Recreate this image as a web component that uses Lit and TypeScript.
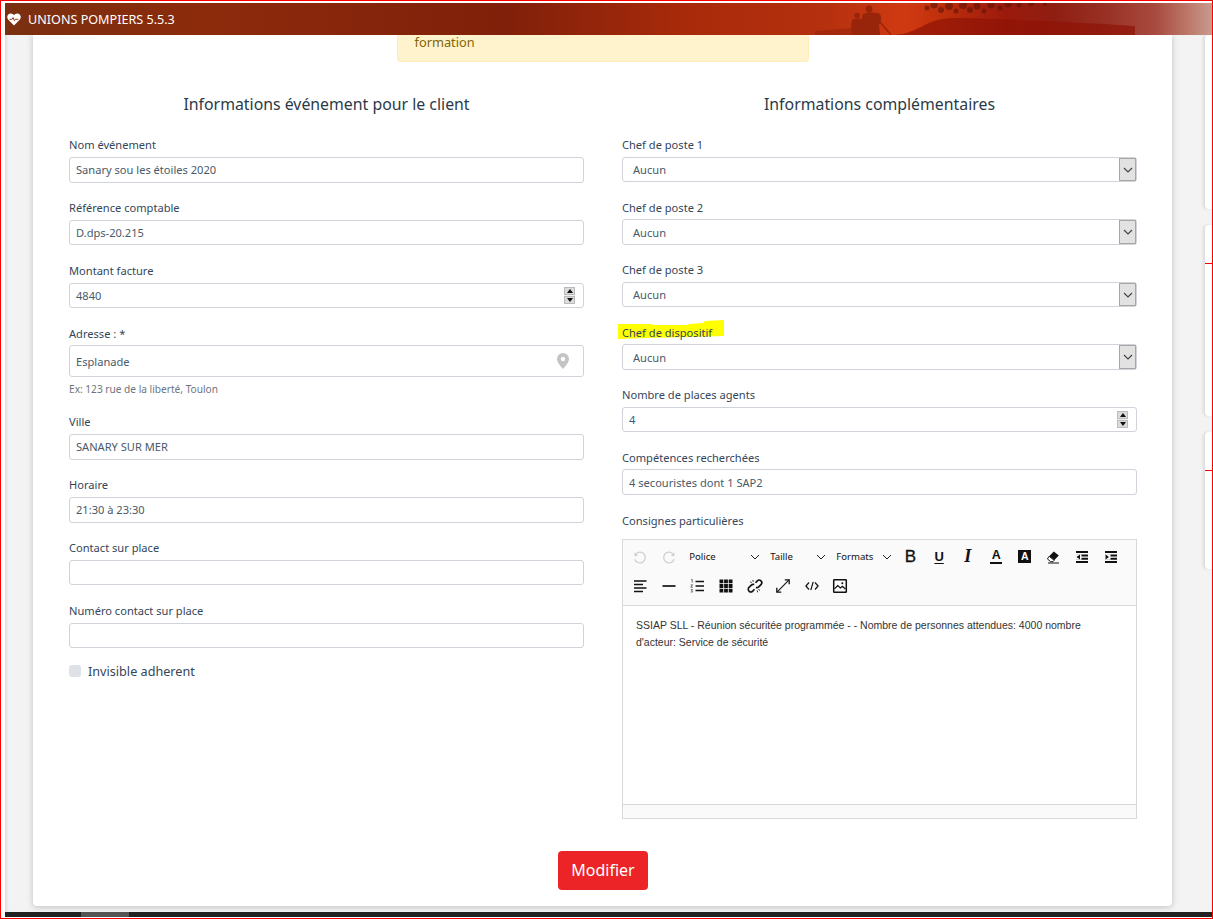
import { LitElement, html, css, svg } from "lit";
import { customElement } from "lit/decorators.js";

const ic = (body: unknown) => html`<svg class="ic" viewBox="0 0 24 24" width="24" height="24">${body}</svg>`;

const undo = svg`<path d="M8.200 8.600a5.400 5.400 0 1 1-1.400 5.600" fill="none" stroke="#cfcfcf" stroke-width="1.300"/><path d="M6.400 7.600l.3 4 3.700-1.300z" fill="#cfcfcf"/>`;
const redo = svg`<path d="M15.800 8.600a5.400 5.400 0 1 0 1.400 5.600" fill="none" stroke="#cfcfcf" stroke-width="1.300"/><path d="M17.600 7.600l-.3 4-3.700-1.300z" fill="#cfcfcf"/>`;
const eraser = svg`<path d="M12.800 6.500l5 4-4.600 4.800-5-4z" fill="#111"/><path d="M8.200 11.300l5 4-1.300 1.400H9.600l-3.200-2.800z" fill="#fff" stroke="#111" stroke-width="1"/><path d="M7 18h11" stroke="#111" stroke-width="1"/>`;
const bars = svg`<path d="M6 7h12M6 17h12" stroke="#111" stroke-width="2"/><path d="M6 10.400h12M6 13.700h12" stroke="#111" stroke-width="2"/>`;
const notch = svg`<rect x="5.500" y="9.200" width="6" height="5.600" fill="#fafafa"/>`;
const outdent = svg`${bars}${notch}<path d="M6.500 12l3.500-2.600v5.200z" fill="#111"/>`;
const indent = svg`${bars}${notch}<path d="M10 12L6.500 9.400v5.200z" fill="#111"/>`;
const alignLeft = svg`<path d="M6 7h12.500M6 10.500h9M6 14h12.500M6 17.500h9" stroke="#111" stroke-width="1.600"/>`;
const hr = svg`<path d="M5.500 12h13" stroke="#111" stroke-width="1.700"/>`;
const ol = svg`<path d="M10.500 7.500h8.500M10.500 12h8.500M10.500 16.500h8.500" stroke="#111" stroke-width="1.500"/><path d="M6.200 5.800l1-.5v3.300M5.800 10.800h1.800l-1.800 2.400h2M5.800 15.600h1.800l-.9 1.200.9 1.200H5.800" fill="none" stroke="#333" stroke-width=".7"/>`;
const table = svg`<path d="M5.500 5.500h3.800v3.800H5.500zM10.100 5.500h3.800v3.800h-3.800zM14.700 5.500h3.800v3.800h-3.800zM5.500 10.100h3.800v3.800H5.500zM10.100 10.100h3.800v3.800h-3.800zM14.700 10.100h3.800v3.800h-3.800zM5.500 14.700h3.800v3.800H5.500zM10.100 14.700h3.800v3.800h-3.800zM14.700 14.700h3.800v3.800h-3.800z" fill="#111"/>`;
const unlink = svg`<path d="M12.500 8.800l1.800-1.900a2.600 2.600 0 0 1 3.700 3.700l-2.300 2.300a2.600 2.600 0 0 1-2.900.5M11.500 15.200l-1.800 1.900a2.600 2.600 0 0 1-3.700-3.700l2.300-2.300a2.600 2.600 0 0 1 2.900-.5" fill="none" stroke="#111" stroke-width="1.600"/><path d="M9.800 6l.5 1.800M7.200 7.800l1.500.9M14.200 16.500l.5 1.800M15.500 15.500l1.500.9" stroke="#111" stroke-width=".9"/>`;
const fullscreen = svg`<path d="M6.200 17.800L17.800 6.200" stroke="#111" stroke-width="1.100"/><path d="M13.800 5.800h4.400v4.400M5.800 13.800v4.400h4.400" fill="none" stroke="#111" stroke-width="1.300"/>`;
const code = svg`<path d="M9 8.500L5.900 12 9 15.500M15 8.500l3.100 3.500-3.100 3.500M13.200 7.800l-2.400 8.400" fill="none" stroke="#111" stroke-width="1.200"/>`;
const image = svg`<rect x="5.700" y="5.700" width="12.600" height="12.600" rx=".6" fill="none" stroke="#111" stroke-width="1.500"/><path d="M6.500 14.800l3.200-3.300 2.700 2.500 2-1.800 3 2.800" fill="none" stroke="#111" stroke-width="1.200"/><circle cx="14.300" cy="9.200" r="1" fill="#111"/>`;

const chevron = html`<svg class="chev" viewBox="0 0 10 6" width="10" height="6"><path d="M1 1l4 4 4-4" fill="none" stroke="#222" stroke-width="1"/></svg>`;
const selArrow = html`<span class="arrow"><svg viewBox="0 0 10 6" width="10" height="6"><path d="M1 1l4 4 4-4" fill="none" stroke="#444" stroke-width="1.200"/></svg></span>`;

const leaves: [number, number, number][] = [
  [922, 5, 2.500], [929, 2, 3.500], [936, 7, 3], [944, 3, 4], [951, 8, 2.500], [958, 2, 4], [965, 7, 3], [972, 3, 3.500],
  [979, 8, 2.500], [986, 2, 3.500], [995, 5, 2.500], [1003, 1, 3.500], [1014, 2, 2.500], [1026, 0, 3], [1040, 1, 2],
];

@customElement("app-root")
export class AppRoot extends LitElement {
  static styles = css`
    :host {
      display: grid;
      grid-template-rows: 32px 1fr 5px;
      position: relative;
      box-sizing: border-box;
      width: 1213px;
      height: 919px;
      padding: 2px 0 1px 4px;
      overflow: hidden;
      background: #fff;
      font-family: "Noto Sans", "Open Sans", sans-serif;
      color: #2f4050;
      border: 1px solid #f00;
    }
    .hdr {
      position: relative;
      display: flex;
      align-items: center;
      gap: 7px;
      padding-left: 2px;
      overflow: hidden;
      color: #fff;
      font-size: 12.600px;
      background: linear-gradient(90deg, #7a3010 0, #8c2b0c 200px, #80200a 500px, #a82a0a 680px, #b5300e 820px, #d03a12 900px, #c0300c 935px, #9a1a0c 1000px, #8f1e12 1050px, #983024 1100px, #a84a3e 1150px, #c08274 1190px, #c99a90 1207px);
    }
    .scene { position: absolute; left: 0; top: 0; }
    .soft { filter: blur(0.7px); }
    .hdr > span, .hdr > .heart { position: relative; }
    .heart { flex: none; }
    .main {
      display: flex;
      min-height: 0;
      background: #f3f3f3;
      box-shadow: inset 4px 0 3px -2px #ddd;
      padding-left: 28px;
    }
    .card {
      box-sizing: border-box;
      width: 1139px;
      flex: none;
      padding: 0 35px 0 36px;
      height: 871px;
      background: #fff;
      border-radius: 0 0 4px 4px;
      box-shadow: 0 1px 6px rgba(0, 0, 0, 0.22);
      display: flex;
      flex-direction: column;
    }
    .alert {
      box-sizing: border-box;
      align-self: center;
      width: 412px;
      height: 27px;
      margin-right: 1px;
      padding: 0 17px;
      font-size: 12.800px;
      line-height: 15px;
      color: #856404;
      background: #fff3cd;
      border: 1px solid #ffeeba;
      border-top: 0;
      border-radius: 0 0 4px 4px;
    }
    .cols { display: flex; gap: 38px; margin-top: 30px; }
    .col { width: 515px; flex: none; }
    h2 {
      margin: 0 0 20.300px;
      font-size: 15.850px;
      line-height: 24px;
      font-weight: 400;
      text-align: center;
      color: #2b3a48;
    }
    .f { position: relative; }
    .l .f { margin-bottom: 16.480px; }
    .r .f { margin-bottom: 16.500px; }
    label { display: block; font-size: 11.100px; line-height: 17px; margin-bottom: 3.700px; color: #33465a; }
    label.last { margin-top: 17.500px; }
    .in {
      box-sizing: border-box;
      position: relative;
      display: flex;
      align-items: center;
      width: 100%;
      height: 25.670px;
      padding: 0 6px;
      font-size: 11.100px;
      color: #495a68;
      background: #fff;
      border: 1px solid #ced4da;
      border-radius: 3px;
    }
    .r .in { height: 25.300px; }
    .in.tall { height: 32px; }
    .in.sel { padding-left: 10px; }
    .in.blue { color: #2f5c8c; }
    .help { margin: 5px 0 -0.500px; font-size: 10.150px; line-height: 15px; color: #6c757d; }
    .pin { position: absolute; right: 14px; top: 7px; }
    .spin {
      position: absolute;
      right: 8px;
      top: 3px;
      width: 11px;
      height: 17px;
      display: flex;
      flex-direction: column;
      gap: 1px;
      background: #f0f0f0;
    }
    .spin i { flex: 1; background: #dcdcdc; position: relative; border: 1px solid #bbb; box-sizing: border-box; display: flex; align-items: center; justify-content: center; }
    .spin i::after { content: ""; border: 3px solid transparent; }
    .spin i.up::after { border-top: 0; border-bottom: 4px solid #111; }
    .spin i.dn::after { border-bottom: 0; border-top: 4px solid #111; }
    .arrow {
      position: absolute;
      right: 0;
      top: 0;
      bottom: 0;
      width: 17px;
      box-sizing: border-box;
      display: flex;
      align-items: center;
      justify-content: center;
      background: #e2e2e2;
      border: 1px solid #a6a6a6;
    }
    .arrow svg { width: 10px; height: 6px; }
    .check { display: flex; align-items: center; gap: 7px; font-size: 12.650px; line-height: 18px; margin-top: -2.500px; color: #33465a; }
    .box { width: 12px; height: 12px; border-radius: 3px; background: #dee2e6; }
    .mark { position: absolute; left: -4px; top: -5px; }
    .marked label { position: relative; }
    .ed {
      box-sizing: border-box;
      height: 280px;
      margin-top: 9.700px;
      display: flex;
      flex-direction: column;
      border: 1px solid #d9d9d9;
      font-family: "Liberation Sans", Arial, sans-serif;
      color: #222;
    }
    .tb { background: #fafafa; border-bottom: 1px solid #d9d9d9; padding: 2.500px 0 4px 3px; height: 66px; box-sizing: border-box; }
    .row { display: flex; align-items: center; height: 29px; }
    .b { flex: none; width: 28.600px; height: 29px; display: flex; align-items: center; justify-content: center; color: #111; }
    .ic { display: block; }
    .dd { flex: none; display: flex; align-items: center; justify-content: space-between; box-sizing: border-box; height: 29px; padding: 0 4px 0 6px; font-size: 9.600px; font-family: "Noto Sans", sans-serif; color: #111; }
    .dd.w1 { width: 81px; }
    .dd.w2 { width: 66px; }
    .t { font-family: "Liberation Sans", sans-serif; font-size: 17px; line-height: 17px; -webkit-text-stroke: 0.3px #111; }
    .t.u { font-size: 13px; font-weight: 700; text-decoration: underline; text-underline-offset: 2px; -webkit-text-stroke: 0; }
    .t.i { font-family: "Liberation Serif", serif; font-style: italic; font-size: 18px; font-weight: 700; -webkit-text-stroke: 0; }
    .t.a { font-size: 12.500px; font-weight: 700; border-bottom: 2px solid #111; line-height: 11px; padding: 0 1.500px 1px; -webkit-text-stroke: 0; }
    .t.inv { font-size: 10.500px; font-weight: 700; background: #111; color: #fff; width: 13px; height: 13px; line-height: 13px; text-align: center; -webkit-text-stroke: 0; }
    .body { flex: 1; padding: 11px 13px; font-size: 10.500px; line-height: 17px; color: #333; }
    .st { height: 13px; background: #fafafa; border-top: 1px solid #d9d9d9; }
    .btnrow { display: flex; justify-content: center; margin-top: 32px; }
    button {
      width: 90px;
      height: 39px;
      border: 0;
      border-radius: 4px;
      background: #ec2427;
      color: #fff;
      font: 400 16px "Noto Sans", sans-serif;
    }
    .side { flex: 1; display: flex; flex-direction: column; padding-left: 33px; }
    .tile { background: #fff; border-radius: 4px 0 0 4px; box-shadow: -2px 0 3px rgba(0, 0, 0, 0.1); }
    .tile.a { height: 174px; }
    .tile.b2 { height: 191px; margin-top: 16px; }
    .tile.c { height: 137px; margin-top: 16px; }
    .rl { height: 1px; background: #f00; margin-top: 38px; }
    .sb { background: #222; display: flex; }
    .sb i { width: 48px; margin-left: 76px; background: #555; }
  `;

  private field(label: string, value: string, kind = "") {
    return html`<div class="f">
      <label>${label}</label>
      <div class="in ${kind === "blue" ? "blue" : ""}">${value}
        ${kind === "num" || kind === "blue"
          ? html`<div class="spin"><i class="up"></i><i class="dn"></i></div>`
          : ""}
      </div>
    </div>`;
  }

  private select(label: string) {
    return html`<div class="f">
      <label>${label}</label>
      <div class="in sel">Aucun${selArrow}</div>
    </div>`;
  }

  render() {
    return html`
      <header class="hdr">
        <svg class="scene" width="1208" height="32" viewBox="0 0 1208 32">
          <g class="soft">
            <path d="M890 32c10-1 18-4 26-8 10-6 22-9 34-9 30 0 60 2 90 3 40 2 60 3 90 5v9z" fill="#8e1206" opacity=".7"/>
            <g fill="#5e1408" opacity=".6">
              ${leaves.map(([x, y, r]) => svg`<circle cx=${x} cy=${y} r=${r}></circle>`)}
            </g>
            <g fill="#98240a">
              <circle cx="864" cy="6" r="3.400"/>
              <path d="M858 11c3-2 13-2 17 0 2 4 1 9-1 11l1 10h-17c-1-7-2-15 0-21z"/>
              <circle cx="852" cy="12.500" r="2.800"/>
              <path d="M847 17c2-2 8-2 11 0v15h-11c-1-5-1-10 0-15z"/>
              <path d="M810 28l38-3v7h-38z" opacity=".6"/>
            </g>
            <path d="M875 19l11 13" stroke="#98240a" stroke-width="1.400"/>
          </g>
        </svg>
        <svg class="heart" width="14" height="13" viewBox="0 0 14 13">
          <path d="M7 12.500L1.300 6.700C-1.200 3.800 1 .5 3.800.5 5.200.5 6.300 1.300 7 2.300 7.700 1.300 8.800.5 10.200.5c2.800 0 5 3.300 2.500 6.200z" fill="#fff"/>
          <path d="M2.500 6.300h2.600l1-1.800 1.300 3.300 1-1.500h3" fill="none" stroke="#8a2c10" stroke-width=".9"/>
        </svg>
        <span>UNIONS POMPIERS 5.5.3</span>
      </header>

      <main class="main">
        <section class="card">
          <div class="alert">formation</div>
          <div class="cols">
            <div class="col l">
              <h2>Informations événement pour le client</h2>
              ${this.field("Nom événement", "Sanary sou les étoiles 2020")}
              ${this.field("Référence comptable", "D.dps-20.215")}
              ${this.field("Montant facture", "4840", "num")}
              <div class="f">
                <label>Adresse : *</label>
                <div class="in tall">Esplanade
                  <svg class="pin" width="12" height="16" viewBox="0 0 12 16">
                    <path fill-rule="evenodd" d="M6 0a6 6 0 0 1 6 6c0 3.500-4 7.500-6 10C4 13.500 0 9.500 0 6a6 6 0 0 1 6-6zm0 3.800a2.200 2.200 0 1 0 0 4.400 2.200 2.200 0 0 0 0-4.400z" fill="#c4c4c4"/>
                  </svg>
                </div>
                <p class="help">Ex: 123 rue de la liberté, Toulon</p>
              </div>
              ${this.field("Ville", "SANARY SUR MER")}
              ${this.field("Horaire", "21:30 à 23:30")}
              ${this.field("Contact sur place", "")}
              ${this.field("Numéro contact sur place", "")}
              <div class="check"><span class="box"></span>Invisible adherent</div>
            </div>

            <div class="col r">
              <h2>Informations complémentaires</h2>
              ${this.select("Chef de poste 1")}
              ${this.select("Chef de poste 2")}
              ${this.select("Chef de poste 3")}
              <div class="f marked">
                <svg class="mark" width="106" height="20" viewBox="0 0 106 20">
                  <path d="M0 5h34l1 1h35l1-1 14-1 2-2 19-1v16l-32 1-44 1-30 1z" fill="#ff0"/>
                </svg>
                <label>Chef de dispositif</label>
                <div class="in sel">Aucun${selArrow}</div>
              </div>
              ${this.field("Nombre de places agents", "4", "blue")}
              ${this.field("Compétences recherchées", "4 secouristes dont 1 SAP2")}
              <label class="last">Consignes particulières</label>
              <div class="ed">
                <div class="tb">
                  <div class="row">
                    <span class="b">${ic(undo)}</span>
                    <span class="b">${ic(redo)}</span>
                    <span class="dd w1">Police${chevron}</span>
                    <span class="dd w2">Taille${chevron}</span>
                    <span class="dd w2">Formats${chevron}</span>
                    <span class="b"><span class="t">B</span></span>
                    <span class="b"><span class="t u">U</span></span>
                    <span class="b"><span class="t i">I</span></span>
                    <span class="b"><span class="t a">A</span></span>
                    <span class="b"><span class="t inv">A</span></span>
                    <span class="b">${ic(eraser)}</span>
                    <span class="b">${ic(outdent)}</span>
                    <span class="b">${ic(indent)}</span>
                  </div>
                  <div class="row">
                    <span class="b">${ic(alignLeft)}</span>
                    <span class="b">${ic(hr)}</span>
                    <span class="b">${ic(ol)}</span>
                    <span class="b">${ic(table)}</span>
                    <span class="b">${ic(unlink)}</span>
                    <span class="b">${ic(fullscreen)}</span>
                    <span class="b">${ic(code)}</span>
                    <span class="b">${ic(image)}</span>
                  </div>
                </div>
                <div class="body">SSIAP SLL - Réunion sécuritée programmée - - Nombre de personnes attendues: 4000 nombre d'acteur: Service de sécurité</div>
                <div class="st"></div>
              </div>
            </div>
          </div>
          <div class="btnrow"><button>Modifier</button></div>
        </section>

        <aside class="side">
          <div class="tile a"></div>
          <div class="tile b2"><div class="rl"></div></div>
          <div class="tile c"><div class="rl"></div></div>
        </aside>
      </main>
      <div class="sb"><i></i></div>
    `;
  }
}
